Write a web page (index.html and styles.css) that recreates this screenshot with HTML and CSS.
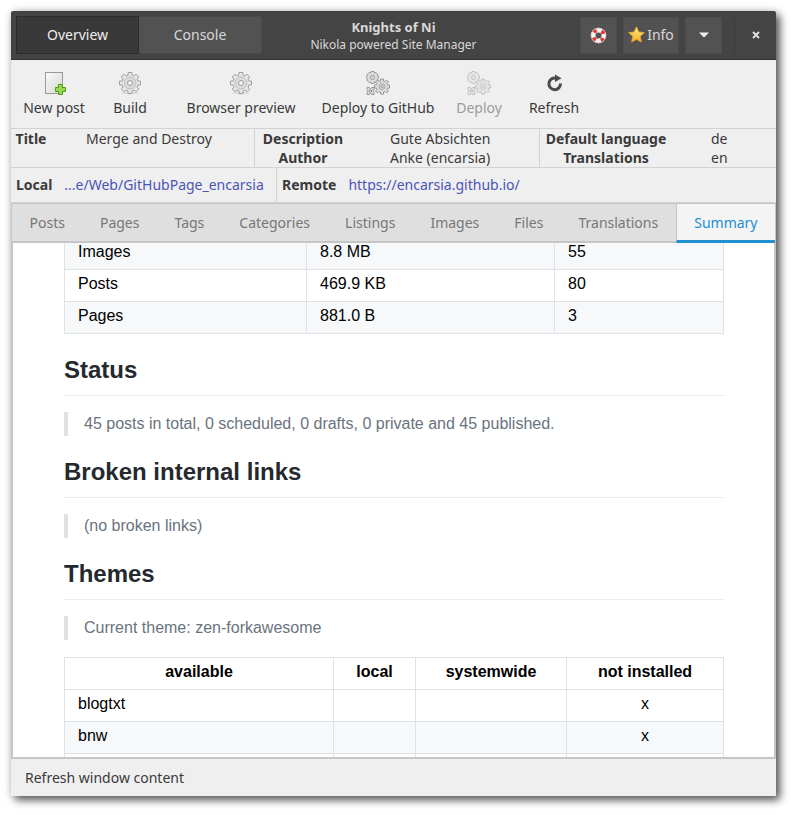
FILE: index.html
```
<!DOCTYPE html>
<html lang="en">
<head>
<meta charset="utf-8">
<title>Knights of Ni</title>
<link rel="stylesheet" href="styles.css">
</head>
<body>
<svg class="defs" width="0" height="0" aria-hidden="true">
  <defs>
    <linearGradient id="paper" x1="0" y1="0" x2="1" y2="1"><stop offset="0" stop-color="#fafafa"/><stop offset="1" stop-color="#d6d6d4"/></linearGradient>
    <linearGradient id="gold" x1="0" y1="0" x2="0" y2="1"><stop offset="0" stop-color="#fff08a"/><stop offset="1" stop-color="#f5ac20"/></linearGradient>
    <symbol id="gear" viewBox="0 0 24 24">
      <ellipse cx="12" cy="22" rx="9" ry="1.500" fill="#000" opacity=".08"/>
      <path d="M10 1.500h4v2.600l2 .9 2-1.800 2.800 2.800-1.800 2 .9 2h2.600v4h-2.600l-.9 2 1.800 2-2.800 2.800-2-1.800-2 .9v2.600h-4v-2.600l-2-.9-2 1.800-2.800-2.800 1.800-2-.9-2H1.500v-4h2.600l.9-2-1.800-2L6 3.200 8 5l2-.9z" fill="#e6e6e6" stroke="#a0a0a0" stroke-linejoin="round"/>
      <circle cx="12" cy="12" r="6" fill="#dcdcdc" stroke="#bcbcbc"/>
      <circle cx="12" cy="12" r="2.500" fill="#f3f3f3" stroke="#999"/>
    </symbol>
    <symbol id="gears" viewBox="0 0 24 24">
      <g fill="#dcdcdc" stroke="#979797" stroke-linejoin="round">
        <path d="M5 .5h3l.5 1.500 1.500-.5L12 3.500l-.5 1.500 1 .5v2l-1 .5.5 1.500-2 2-1.500-.5-.5 1.500H5l-.5-1.500-1.500.5-2-2L1.500 8l-1-.5v-2l1-.5L1 3.500l2-2 1.500.5z"/>
        <circle cx="6.500" cy="6.500" r="2"/>
        <path d="M14.500 8h3v2l1.500.6L20.500 9l2 2-1.500 1.500.6 1.500h2v3h-2l-.6 1.500 1.500 1.500-2 2-1.500-1.500-1.500.6v2h-3v-2l-1.500-.6-1.500 1.500-2-2 1.500-1.500-.6-1.500h-2v-3h2l.6-1.500L9.500 11l2-2 1.500 1.600 1.500-.6z"/>
        <circle cx="16" cy="15.500" r="3" stroke="#aaa"/><circle cx="16" cy="15.500" r="1.200" fill="#f3f3f3"/>
        <path d="M1 16.500h2l1.500 1 1.500-1h2v2l-1 1.500 1 1.500v2H6l-1.500-1-1.500 1H1v-2L2 20l-1-1.500z"/>
        <rect x="3.500" y="19" width="2" height="2" fill="#eee"/>
      </g>
    </symbol>
  </defs>
</svg>
<div class="window">
  <header class="titlebar">
    <div class="switcher">
      <button class="switch active" type="button">Overview</button><button class="switch" type="button">Console</button>
    </div>
    <div class="heading">
      <h1>Knights of Ni</h1>
      <p>Nikola powered Site Manager</p>
    </div>
    <div class="controls">
      <button class="tool" type="button" aria-label="Help">
        <svg width="17" height="17" viewBox="0 0 18 18"><circle cx="9" cy="9" r="5.700" fill="none" stroke="#f4f4f2" stroke-width="5"/><circle cx="9" cy="9" r="5.700" fill="none" stroke="#e0383b" stroke-width="4" stroke-dasharray="3.400 5.553" stroke-dashoffset="-2.776"/><circle cx="9" cy="9" r="7.800" fill="none" stroke="#d9a5a5" stroke-width=".6"/></svg>
      </button>
      <button class="tool info" type="button">
        <svg width="17" height="17" viewBox="0 0 16 16"><path d="M8 .8l2.200 4.800 5.200.6-3.900 3.500 1.100 5.400L8 12.600l-4.600 2.500 1.100-5.400L.6 6.200l5.200-.6z" fill="url(#gold)" stroke="#e9a52a" stroke-width=".8" stroke-linejoin="round"/></svg>Info
      </button>
      <button class="tool" type="button" aria-label="Menu">
        <svg width="10" height="6" viewBox="0 0 10 6"><path d="M0 .5h10L5 5.500z" fill="#eee"/></svg>
      </button>
      <button class="close" type="button" aria-label="Close">
        <svg width="8" height="8" viewBox="0 0 8 8"><path d="M1 1l6 6M7 1L1 7" stroke="#ddd" stroke-width="2"/></svg>
      </button>
    </div>
  </header>

  <nav class="toolbar" aria-label="Actions">
    <button type="button"><svg width="24" height="24" viewBox="-1 0 24 24"><rect x="2.500" y="1.500" width="17" height="21" fill="url(#paper)" stroke="#9a9a9a"/><path d="M15.500 13.500h4v3h3v4h-3v3h-4v-3h-3v-4h3z" fill="#93d94e" stroke="#4e9a1b"/></svg>New post</button>
    <button type="button"><svg width="24" height="24"><use href="#gear"/></svg>Build</button>
    <button type="button"><svg width="24" height="24"><use href="#gear"/></svg>Browser preview</button>
    <button type="button"><svg width="24" height="24"><use href="#gears"/></svg>Deploy to GitHub</button>
    <button type="button" disabled><svg width="24" height="24"><use href="#gears"/></svg>Deploy</button>
    <button type="button"><svg width="24" height="24" viewBox="-1 0 24 24"><path d="M17.500 12.500A5.800 5.800 0 1 1 13 7.200" fill="none" stroke="#4a4a4a" stroke-width="3"/><path d="M12 3.500l6.500 3.800L12 11z" fill="#4a4a4a"/></svg>Refresh</button>
  </nav>

  <section class="facts">
    <dl class="fact-title"><dt>Title</dt><dd>Merge and Destroy</dd></dl>
    <dl class="fact-about"><dt>Description</dt><dd>Gute Absichten</dd><dt>Author</dt><dd>Anke (encarsia)</dd></dl>
    <dl class="fact-language"><dt>Default language</dt><dd>de</dd><dt>Translations</dt><dd>en</dd></dl>
  </section>

  <section class="places">
    <div><b>Local</b><a href="#local">...e/Web/GitHubPage_encarsia</a></div>
    <div><b>Remote</b><a href="#remote">https://encarsia.github.io/</a></div>
  </section>

  <main class="notebook">
    <div class="tabs" role="tablist">
      <button role="tab" type="button">Posts</button>
      <button role="tab" type="button">Pages</button>
      <button role="tab" type="button">Tags</button>
      <button role="tab" type="button">Categories</button>
      <button role="tab" type="button">Listings</button>
      <button role="tab" type="button">Images</button>
      <button role="tab" type="button">Files</button>
      <button role="tab" type="button">Translations</button>
      <button role="tab" type="button" aria-selected="true">Summary</button>
    </div>
    <div class="view">
      <article class="report">
        <table class="sizes">
          <colgroup><col class="name"><col class="size"><col></colgroup>
          <tbody>
            <tr class="shade"><td>Images</td><td>8.8 MB</td><td>55</td></tr>
            <tr><td>Posts</td><td>469.9 KB</td><td>80</td></tr>
            <tr class="shade"><td>Pages</td><td>881.0 B</td><td>3</td></tr>
          </tbody>
        </table>
        <h2>Status</h2>
        <blockquote>45 posts in total, 0 scheduled, 0 drafts, 0 private and 45 published.</blockquote>
        <h2>Broken internal links</h2>
        <blockquote>(no broken links)</blockquote>
        <h2>Themes</h2>
        <blockquote>Current theme: zen-forkawesome</blockquote>
        <table class="themes">
          <colgroup><col class="available"><col class="local"><col class="system"><col></colgroup>
          <thead><tr><th>available</th><th>local</th><th>systemwide</th><th>not installed</th></tr></thead>
          <tbody>
            <tr><td>blogtxt</td><td></td><td></td><td>x</td></tr>
            <tr class="shade"><td>bnw</td><td></td><td></td><td>x</td></tr>
            <tr><td></td><td></td><td></td><td></td></tr>
          </tbody>
        </table>
      </article>
    </div>
  </main>
  <footer class="status">Refresh window content</footer>
</div>
</body>
</html>
```

FILE: styles.css
```
* { box-sizing: border-box; }
body {
  margin: 0;
  height: 100vh;
  padding: 11px 19px 19px 11px;
  background: #fff;
  color: #3a3a3a;
  font: 14px/19px "Noto Sans", "Open Sans", sans-serif;
}
button { font: inherit; color: inherit; border: 0; background: none; padding: 0; }
h1, h2, p, dl, dd, blockquote { margin: 0; }
.defs { position: absolute; }

.window {
  height: 100%;
  display: flex;
  flex-direction: column;
  background: #efefef;
  border-radius: 2px 2px 0 0;
  box-shadow: 4px 4px 9px rgba(0, 0, 0, .65), 0 0 10px rgba(0, 0, 0, .15);
}

.titlebar {
  display: grid;
  grid-template-columns: 1fr auto 1fr;
  align-items: center;
  height: 49px;
  padding: 0 5px;
  background: #444;
  border-bottom: 1px solid #333;
  border-radius: 2px 2px 0 0;
  color: #d8d8d8;
}
.switcher { display: flex; }
.switch {
  width: 123px;
  height: 38px;
  padding-bottom: 2px;
  background: #525252;
  border: 1px solid #4a4a4a;
  border-left: 0;
}
.switch.active { background: #393939; border: 1px solid #2c2c2c; color: #eee; }
.heading { text-align: center; }
.heading h1 { font-size: 13px; line-height: 18px; font-weight: 700; }
.heading p { font-size: 12px; line-height: 17px; }
.controls { display: flex; justify-content: flex-end; align-items: center; gap: 6px; }
.tool {
  display: flex;
  align-items: center;
  justify-content: center;
  width: 37px;
  height: 37px;
  background: #525252;
  border: 1px solid #4c4c4c;
}
.tool.info { width: 56px; gap: 2px; padding-bottom: 2px; }
.close {
  display: flex;
  align-items: center;
  justify-content: center;
  width: 37px;
  height: 37px;
  margin-left: 6px;
  padding-left: 5px;
  border-left: 1px solid #3b3b3b;
}

.toolbar {
  display: grid;
  grid-template-columns: 84px 68px 154px 120px 82px 68px;
  height: 69px;
  padding: 11px 1px 0;
  border-bottom: 1px solid #d2d2d2;
}
.toolbar button {
  display: flex;
  flex-direction: column;
  align-items: center;
  gap: 3px;
  white-space: nowrap;
}
.toolbar button:disabled { color: #9c9c9c; }
.toolbar button:disabled svg { opacity: .5; }

.facts {
  display: flex;
  height: 39px;
  border-bottom: 1px solid #d2d2d2;
}
.facts dl { display: grid; align-content: start; white-space: nowrap; }
.facts dl + dl { border-left: 1px solid #d2d2d2; }
.facts dt { font-weight: 700; text-align: center; }
.fact-title { width: 243px; grid-template-columns: 40px 1fr; column-gap: 35px; }
.fact-about { width: 285px; grid-template-columns: 96px 1fr; column-gap: 39px; }
.fact-language { flex: 1; grid-template-columns: 132px 1fr; column-gap: 39px; }

.places {
  display: grid;
  grid-template-columns: 265px 1fr;
  height: 35px;
  border-bottom: 1px solid #d2d2d2;
}
.places div { display: flex; align-items: center; gap: 12px; padding: 0 5px 2px; }
.places div + div { border-left: 1px solid #d2d2d2; }
.places a { color: #4a55b8; text-decoration: none; }

.notebook {
  flex: 1;
  min-height: 0;
  display: flex;
  flex-direction: column;
  border: solid #c6c6c6;
  border-width: 1px 1px 2px;
}
.tabs {
  display: flex;
  height: 39px;
  background: #dfdfdf;
  border-bottom: 2px solid #c6c6c6;
}
.tabs button { flex: 1 0 auto; padding: 0 16px; color: #777; }
.tabs [aria-selected="true"] {
  margin-bottom: -2px;
  padding-top: 1px;
  background: #f4f4f4;
  color: #218fd0;
  border-left: 1px solid #c6c6c6;
  border-bottom: 3px solid #218fd0;
}

.view {
  flex: 1;
  min-height: 0;
  overflow: hidden;
  background: #fff;
  border: solid #c6c6c6;
  border-width: 0 1px;
}
.report {
  margin: -6px 50px 0 51px;
  color: #000;
  font: 16px/24px "Liberation Sans", Arial, sans-serif;
}
table { width: 100%; table-layout: fixed; border-collapse: collapse; }
th, td { height: 32px; padding: 1px 13px 5px; border: 1px solid #dfe2e5; text-align: left; }
.shade { background: #f6f8fa; }
.sizes .name { width: 242px; }
.sizes .size { width: 248px; }
.themes .available { width: 269px; }
.themes .local { width: 82px; }
.themes .system { width: 151px; }
.themes th, .themes td:last-child { text-align: center; }
h2 {
  margin: 24px 0 16px;
  padding-bottom: 13px;
  border-bottom: 1px solid #eaecef;
  color: #24292e;
  font-size: 24px;
  line-height: 24px;
}
blockquote {
  margin-bottom: 17px;
  padding: 0 16px;
  border-left: 4px solid #dfe2e5;
  color: #6a737d;
}
.status { height: 37px; padding: 9px 14px; }
```
